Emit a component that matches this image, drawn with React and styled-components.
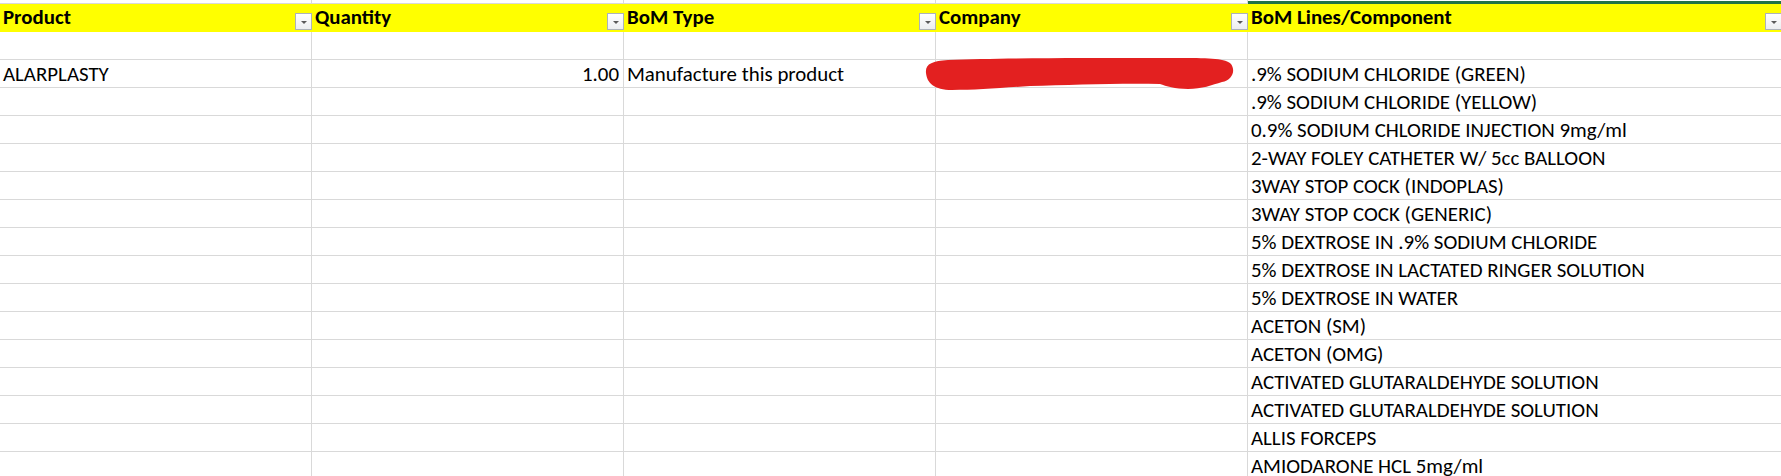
import React from 'react';
import styled, { createGlobalStyle, css } from 'styled-components';

const GRID = '#d9d9d9';
const COLS = '312px 312px 312px 312px 534px';
const FONT = 'Carlito, Calibri, Lato, "Liberation Sans", sans-serif';

const GlobalStyle = createGlobalStyle`
  html, body {
    margin: 0;
    padding: 0;
    background: #ffffff;
    overflow: hidden;
  }
  body {
    font-family: ${FONT};
  }
`;

const Sheet = styled.div`
  width: 1782px;
  display: flex;
  flex-direction: column;
  font-family: ${FONT};
  font-size: 20.9px;
  color: #000;
`;

const Row = styled.div`
  display: grid;
  grid-template-columns: ${COLS};
`;

const StripCell = styled.div`
  box-sizing: border-box;
  height: 4px;
  border-right: 1px solid ${GRID};
  border-bottom: 1px solid ${GRID};
  ${(p) =>
    p.$selected &&
    css`
      border-right: none;
      border-bottom: 3px solid #217346;
    `}
`;

const HeaderCell = styled.div`
  box-sizing: border-box;
  height: 28px;
  background: #ffff00;
  display: flex;
  align-items: flex-end;
  justify-content: space-between;
  padding-left: 3px;
  font-weight: 700;
`;

const HeaderLabel = styled.span`
  line-height: 20px;
  padding-bottom: 5px;
  white-space: nowrap;
`;

const FilterButton = styled.span`
  box-sizing: border-box;
  width: 17px;
  height: 17px;
  margin-bottom: 2px;
  flex: none;
  border: 1px solid #acb2b9;
  background: linear-gradient(#ffffff, #eceef0);
  display: flex;
  align-items: center;
  justify-content: center;

  &::after {
    content: '';
    width: 0;
    height: 0;
    margin-top: 1px;
    border-left: 3px solid transparent;
    border-right: 3px solid transparent;
    border-top: 3px solid #5a5a5a;
  }
`;

const Cell = styled.div`
  position: relative;
  box-sizing: border-box;
  height: 28px;
  border-right: 1px solid ${GRID};
  border-bottom: 1px solid ${GRID};
  display: flex;
  align-items: flex-end;
  justify-content: ${(p) => (p.$align === 'right' ? 'flex-end' : 'flex-start')};
  padding: 0 4px 3px 3px;
  line-height: 20px;
  white-space: pre;
`;

const Redaction = styled.svg`
  position: absolute;
  left: -16px;
  top: -5px;
  width: 320px;
  height: 40px;
  pointer-events: none;
`;

const headers = ['Product', 'Quantity', 'BoM Type', 'Company', 'BoM Lines/Component'];

const lines = [
  '.9% SODIUM CHLORIDE (GREEN)',
  '.9% SODIUM CHLORIDE (YELLOW)',
  '0.9% SODIUM CHLORIDE INJECTION 9mg/ml',
  '2-WAY FOLEY CATHETER W/ 5cc BALLOON',
  '3WAY STOP COCK (INDOPLAS)',
  '3WAY STOP COCK (GENERIC)',
  '5% DEXTROSE IN .9% SODIUM CHLORIDE',
  '5% DEXTROSE IN LACTATED RINGER SOLUTION',
  '5% DEXTROSE IN WATER',
  'ACETON (SM)',
  'ACETON (OMG)',
  'ACTIVATED GLUTARALDEHYDE SOLUTION',
  'ACTIVATED GLUTARALDEHYDE SOLUTION',
  'ALLIS FORCEPS',
  'AMIODARONE HCL 5mg/ml',
];

const rows = [
  { product: '', qty: '', type: '', redacted: false, line: '' },
  ...lines.map((line, i) =>
    i === 0
      ? { product: 'ALARPLASTY', qty: '1.00', type: 'Manufacture this product', redacted: true, line }
      : { product: '', qty: '', type: '', redacted: false, line }
  ),
];

function RedactionMark() {
  return (
    <Redaction viewBox="0 0 320 40">
      <path
        d="M6 18 C5 9 12 6 28 5 C80 3 160 3 235 3 C280 3 305 2 311 9 C316 16 312 25 302 27 C292 30 282 34 268 34 C255 34 246 31 240 29 C200 28 150 30 110 31 C80 33 55 35 32 35 C14 35 7 28 6 18 Z"
        fill="#e32020"
      />
    </Redaction>
  );
}

export default function App() {
  return (
    <>
      <GlobalStyle />
      <Sheet>
        <Row>
          {headers.map((h, i) => (
            <StripCell key={h} $selected={i === 4} />
          ))}
        </Row>
        <Row>
          {headers.map((h) => (
            <HeaderCell key={h}>
              <HeaderLabel>{h}</HeaderLabel>
              <FilterButton />
            </HeaderCell>
          ))}
        </Row>
        {rows.map((r, i) => (
          <Row key={i}>
            <Cell>{r.product}</Cell>
            <Cell $align="right">{r.qty}</Cell>
            <Cell>{r.type}</Cell>
            <Cell>{r.redacted && <RedactionMark />}</Cell>
            <Cell>{r.line}</Cell>
          </Row>
        ))}
      </Sheet>
    </>
  );
}
